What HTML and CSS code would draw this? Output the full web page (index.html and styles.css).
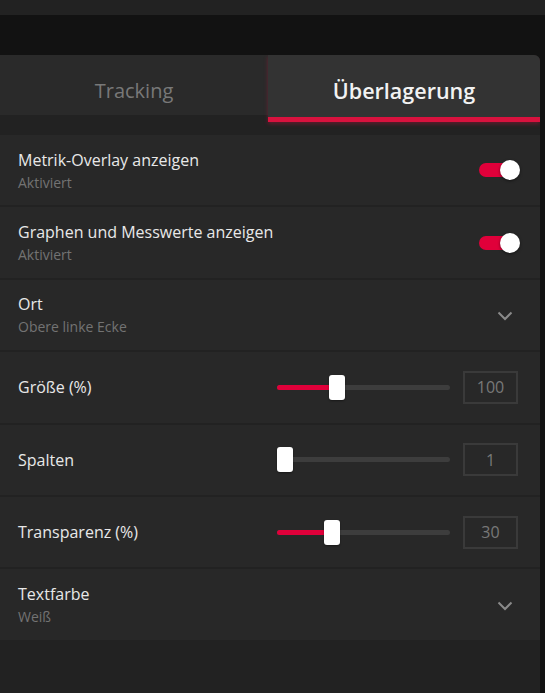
FILE: index.html
```html
<!DOCTYPE html>
<html lang="de">
<head>
    <meta charset="UTF-8">
    <meta name="viewport" content="width=device-width, initial-scale=1.0">
    <title>Überlagerung</title>
    <link rel="stylesheet" href="styles.css">
</head>
<body>
    <div class="topbar"></div>

    <div class="panel">
        <div class="tabs">
            <div class="tab">Tracking</div>
            <div class="tab active">Überlagerung</div>
        </div>

        <div class="settings">
            <div class="row">
                <div class="label">
                    <div class="title">Metrik-Overlay anzeigen</div>
                    <div class="sub">Aktiviert</div>
                </div>
                <div class="toggle on"><span class="knob"></span></div>
            </div>

            <div class="row">
                <div class="label">
                    <div class="title">Graphen und Messwerte anzeigen</div>
                    <div class="sub">Aktiviert</div>
                </div>
                <div class="toggle on"><span class="knob"></span></div>
            </div>

            <div class="row">
                <div class="label">
                    <div class="title">Ort</div>
                    <div class="sub">Obere linke Ecke</div>
                </div>
                <svg class="chevron" width="16" height="10" viewBox="0 0 16 10">
                    <polyline points="1.5,1.5 8,8 14.5,1.5" fill="none" stroke="#8a8a8a" stroke-width="2"/>
                </svg>
            </div>

            <div class="row">
                <div class="title">Größe (%)</div>
                <div class="slider-group">
                    <div class="slider">
                        <div class="track"><div class="fill" style="width: 60px"></div></div>
                        <div class="thumb" style="left: 52px"></div>
                    </div>
                    <div class="value">100</div>
                </div>
            </div>

            <div class="row">
                <div class="title">Spalten</div>
                <div class="slider-group">
                    <div class="slider">
                        <div class="track"><div class="fill" style="width: 0px"></div></div>
                        <div class="thumb" style="left: 0px"></div>
                    </div>
                    <div class="value">1</div>
                </div>
            </div>

            <div class="row">
                <div class="title">Transparenz (%)</div>
                <div class="slider-group">
                    <div class="slider">
                        <div class="track"><div class="fill" style="width: 55px"></div></div>
                        <div class="thumb" style="left: 47px"></div>
                    </div>
                    <div class="value">30</div>
                </div>
            </div>

            <div class="row">
                <div class="label">
                    <div class="title">Textfarbe</div>
                    <div class="sub">Weiß</div>
                </div>
                <svg class="chevron" width="16" height="10" viewBox="0 0 16 10">
                    <polyline points="1.5,1.5 8,8 14.5,1.5" fill="none" stroke="#8a8a8a" stroke-width="2"/>
                </svg>
            </div>
        </div>
    </div>
</body>
</html>
```

FILE: styles.css
```css
body {
    margin: 0;
    background-color: #121212;
    font-family: 'Open Sans', 'Noto Sans', sans-serif;
    color: #e8e8e8;
    height: 693px;
    display: flex;
    flex-direction: column;
    overflow: hidden;
}

.topbar {
    height: 15px;
    background-color: #222;
    margin-bottom: 40px;
    flex-shrink: 0;
}

.panel {
    flex: 1;
    margin-right: 5px;
    background-color: #222;
    border-top-right-radius: 6px;
    overflow: hidden;
}

/* Tabs */
.tabs {
    display: grid;
    grid-template-columns: 268px 1fr;
    align-items: start;
    height: 67px;
    margin-bottom: 13px;
}
.tab {
    height: 60px;
    box-sizing: border-box;
    padding-top: 22px;
    text-align: center;
    font-size: 20px;
    line-height: 28px;
    color: #787878;
    background-color: #2a2a2a;
}
.tab.active {
    height: 67px;
    padding-top: 22px;
    font-size: 21.5px;
    color: #f2f2f2;
    font-weight: 600;
    background-color: #333;
    border-bottom: 5px solid #d8123e;
    box-shadow: 0 2px 4px rgba(216, 18, 62, 0.35);
}

/* Setting rows */
.settings {
    display: flex;
    flex-direction: column;
    gap: 2px;
}
.row {
    height: 70.4px;
    background-color: #282828;
    display: flex;
    align-items: center;
    justify-content: space-between;
    padding: 0 20px 0 18px;
}
.label {
    display: flex;
    flex-direction: column;
}
.title {
    font-size: 16px;
    line-height: 22px;
    color: #e8e8e8;
}
.sub {
    margin-top: 2px;
    font-size: 14px;
    line-height: 19px;
    color: #737373;
}

/* Toggle */
.toggle {
    width: 41px;
    height: 20px;
    position: relative;
    display: flex;
    align-items: center;
}
.toggle::before {
    content: "";
    width: 34px;
    height: 14px;
    border-radius: 7px;
    background-color: #3c3c3c;
}
.toggle.on::before {
    background-color: #e0003a;
}
.toggle .knob {
    position: absolute;
    right: 0;
    top: 0;
    width: 20px;
    height: 20px;
    border-radius: 50%;
    background-color: #fff;
    box-shadow: 0 1px 3px rgba(0,0,0,0.5);
}

.chevron {
    margin-right: 7px;
    margin-top: 2px;
}

/* Sliders */
.slider-group {
    display: flex;
    align-items: center;
    gap: 13px;
    margin-right: 2px;
}
.slider {
    width: 173px;
    height: 25px;
    position: relative;
    display: flex;
    align-items: center;
}
.track {
    width: 100%;
    height: 5px;
    border-radius: 3px;
    background-color: #3d3d3d;
    overflow: hidden;
}
.fill {
    height: 100%;
    background-color: #e0003a;
}
.thumb {
    position: absolute;
    top: 0;
    width: 16px;
    height: 25px;
    border-radius: 3px;
    background-color: #fff;
    box-shadow: 0 1px 2px rgba(0,0,0,0.4);
}
.value {
    width: 55px;
    height: 33px;
    box-sizing: border-box;
    border: 2px solid #3a3a3a;
    color: #787878;
    font-size: 16px;
    display: flex;
    align-items: center;
    justify-content: center;
}
```
